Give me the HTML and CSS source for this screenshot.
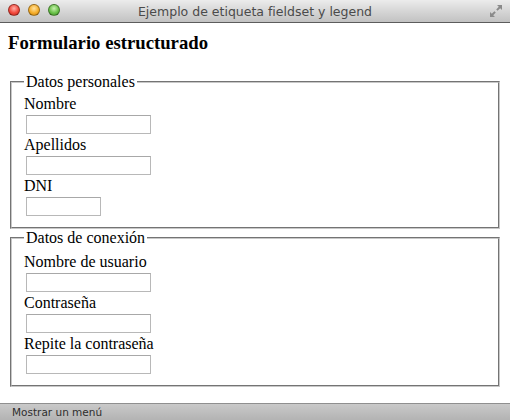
FILE: index.html
```html
<!DOCTYPE html>
<html lang="es">
<head>
<meta charset="utf-8">
<title>Ejemplo de etiqueta fieldset y legend</title>
<link rel="stylesheet" href="styles.css">
</head>
<body>
<div class="window">
  <div class="titlebar">
    <div class="lights">
      <span class="light red"></span>
      <span class="light yellow"></span>
      <span class="light green"></span>
    </div>
    <div class="title">Ejemplo de etiqueta fieldset y legend</div>
    <svg class="fullscreen" width="14" height="14" viewBox="0 0 14 14">
      <path d="M8 1 H13 V6 L11.2 4.2 L8.6 6.8 L7.2 5.4 L9.8 2.8 Z" fill="#8a8a8a"/>
      <path d="M6 13 H1 V8 L2.8 9.8 L5.4 7.2 L6.8 8.6 L4.2 11.2 Z" fill="#8a8a8a"/>
    </svg>
  </div>
  <div class="content">
    <h3 class="heading">Formulario estructurado</h3>
    <form class="form">
      <fieldset class="group">
        <legend class="legend">Datos personales</legend>
        <label class="label">Nombre</label>
        <input class="field" type="text">
        <label class="label">Apellidos</label>
        <input class="field" type="text">
        <label class="label">DNI</label>
        <input class="field short" type="text">
      </fieldset>
      <fieldset class="group group-second">
        <legend class="legend">Datos de conexión</legend>
        <label class="label">Nombre de usuario</label>
        <input class="field" type="text">
        <label class="label">Contraseña</label>
        <input class="field" type="password">
        <label class="label">Repite la contraseña</label>
        <input class="field" type="password">
      </fieldset>
    </form>
  </div>
  <div class="statusbar">Mostrar un menú</div>
</div>
</body>
</html>
```
FILE: styles.css
```css
html, body {
  margin: 0;
  padding: 0;
}
body {
  width: 510px;
  height: 420px;
  overflow: hidden;
  font-family: "Liberation Serif", "Times New Roman", serif;
  font-size: 16px;
  color: #000;
  background: #fff;
}
.window {
  display: flex;
  flex-direction: column;
  width: 510px;
  height: 420px;
}
.titlebar {
  position: relative;
  flex: 0 0 22px;
  display: flex;
  align-items: center;
  justify-content: center;
  background: linear-gradient(#ececec, #d6d6d6 50%, #c2c2c2);
  border-bottom: 1px solid #5c5c5c;
}
.lights {
  position: absolute;
  left: 8px;
  top: 4px;
  display: flex;
  gap: 8px;
}
.light {
  width: 12px;
  height: 12px;
  border-radius: 50%;
  box-sizing: border-box;
  border: 1px solid rgba(0,0,0,0.35);
}
.red { background: radial-gradient(circle at 50% 35%, #ffb0a8, #f24a3d 55%, #c4261c); }
.yellow { background: radial-gradient(circle at 50% 35%, #ffe2a0, #f5ae2c 55%, #c9810c); }
.green { background: radial-gradient(circle at 50% 35%, #c8f0b0, #6bc24a 55%, #3f8f26); }
.title {
  font-family: "DejaVu Sans", "Lucida Grande", sans-serif;
  font-size: 12.5px;
  color: #4a4a4a;
  margin-top: 1px;
}
.fullscreen {
  position: absolute;
  right: 7px;
  top: 4px;
}
.content {
  flex: 1 1 auto;
  padding: 0 8px;
  overflow: hidden;
}
.heading {
  font-size: 18.72px;
  font-weight: bold;
  margin: 9px 0 19px;
}
.form {
  margin: 0;
}
.group {
  margin: 0 2px;
  padding: 4px 12px 9px;
  border: 2px groove #c8c8c8;
  display: flex;
  flex-direction: column;
  align-items: flex-start;
}
.group-second {
  padding-top: 6px;
}
.legend {
  padding: 0 2px;
}
.label {
  display: block;
  line-height: 17px;
}
.field {
  display: block;
  box-sizing: border-box;
  width: 125px;
  height: 19px;
  margin: 3px 0 2px 2px;
  padding: 0;
  border: 1px solid #b8b8b8;
  border-top-color: #a8a8a8;
  background: #fff;
}
.short {
  width: 75px;
}
.statusbar {
  flex: 0 0 17px;
  box-sizing: border-box;
  border-top: 1px solid #8f8f8f;
  background: linear-gradient(#c9c9c9, #b3b3b3);
  font-family: "DejaVu Sans", "Lucida Grande", sans-serif;
  font-size: 10.5px;
  line-height: 16px;
  color: #2e2e2e;
  padding-left: 12px;
}
```
